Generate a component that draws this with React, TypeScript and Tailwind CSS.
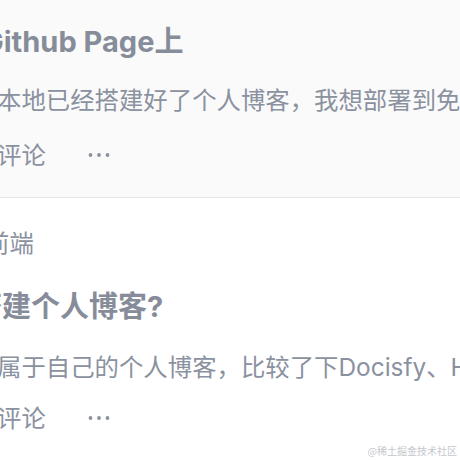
import React from "react";

function Dots() {
  return (
    <svg width="22" height="6" viewBox="0 0 22 6" className="shrink-0">
      <circle cx="2.5" cy="3" r="1.9" fill="#8a919f" />
      <circle cx="11" cy="3" r="1.9" fill="#8a919f" />
      <circle cx="19.5" cy="3" r="1.9" fill="#8a919f" />
    </svg>
  );
}

function Actions() {
  return (
    <div className="flex items-center h-[30px] -ml-[3px] text-[24.4px] leading-[30px] text-[#8a919f] whitespace-nowrap">
      <span>评论</span>
      <span className="ml-[42px] flex items-center">
        <Dots />
      </span>
    </div>
  );
}

export default function App() {
  return (
    <div className="relative w-[460px] h-[460px] overflow-hidden bg-white font-['Inter','Noto_Sans_CJK_SC',sans-serif] text-[#8a919f]">
      <div className="flex flex-col h-[197px] bg-[#fafafa] pt-[21px]">
        <div className="h-[42px] leading-[42px] text-[29px] font-bold whitespace-nowrap -ml-[18px] text-[#868c99]">
          Github Page上
        </div>
        <div className="mt-[18px] h-[38px] leading-[38px] text-[24.4px] whitespace-nowrap -ml-[3px]">
          本地已经搭建好了个人博客，我想部署到免费的Github Page上，请问具体应该怎么操作呢？
        </div>
        <div className="mt-[21px]">
          <Actions />
        </div>
      </div>
      <div className="h-px bg-[#e4e6eb]" />
      <div className="flex flex-col pt-[26px]">
        <div className="h-[38px] leading-[38px] text-[24.4px] whitespace-nowrap -ml-[15px]">
          前端
        </div>
        <div className="mt-[24px] h-[42px] leading-[42px] text-[29px] font-bold whitespace-nowrap -ml-[27px] text-[#868c99]">
          搭建个人博客?
        </div>
        <div className="mt-[20px] h-[38px] leading-[38px] text-[24.4px] whitespace-nowrap -ml-[3px]">
          属于自己的个人博客，比较了下Docisfy、Hexo、VuePress等工具，不知道该选哪个
        </div>
        <div className="mt-[17px]">
          <Actions />
        </div>
      </div>
      <div className="absolute right-[3px] bottom-[3px] text-[10px] leading-[12px] text-[#c4c7cd] whitespace-nowrap font-['Noto_Sans_CJK_SC',sans-serif]">
        @稀土掘金技术社区
      </div>
    </div>
  );
}
